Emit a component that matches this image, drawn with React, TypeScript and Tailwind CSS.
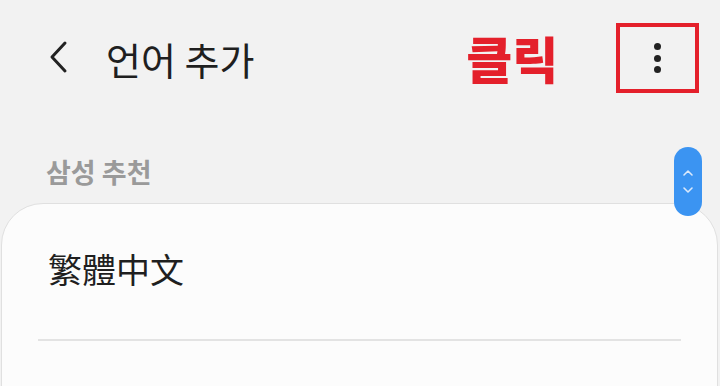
export default function App() {
  const ko = { fontFamily: '"Noto Sans CJK KR", "Noto Sans", sans-serif' };
  const tc = { fontFamily: '"Noto Sans CJK TC", "Noto Sans CJK KR", sans-serif' };
  return (
    <div className="relative w-[720px] h-[386px] overflow-hidden bg-[#f2f2f2]" style={ko}>
      {/* header */}
      <div className="flex items-center h-[116px] pl-[46px]">
        <svg width="24" height="34" viewBox="0 0 24 34" className="mt-[-2px] shrink-0">
          <path d="M19 3 L6 17 L19 31" fill="none" stroke="#222" strokeWidth="3" strokeLinecap="round" strokeLinejoin="round" />
        </svg>
        <h1 className="ml-[36px] text-[38px] leading-none text-[#1f1f1f] mt-[2px] whitespace-nowrap">언어 추가</h1>
        <span className="ml-[212px] text-[50px] font-black leading-none text-[#e4202b] mt-[-2px] whitespace-nowrap">클릭</span>
        <div className="ml-[58px] shrink-0 w-[83px] h-[70px] border-[4px] border-[#e4202b] flex items-center justify-center">
          <div className="flex flex-col gap-[4.5px]">
            <span className="w-[7px] h-[7px] rounded-full bg-[#222]" />
            <span className="w-[7px] h-[7px] rounded-full bg-[#222]" />
            <span className="w-[7px] h-[7px] rounded-full bg-[#222]" />
          </div>
        </div>
      </div>

      {/* section label */}
      <div className="pl-[46px] h-[87px] pt-[42px]">
        <span className="text-[27px] font-bold leading-none text-[#9a9a9a]">삼성 추천</span>
      </div>

      {/* card */}
      <div className="ml-[1px] mr-[2px] h-[260px] rounded-t-[42px] bg-[#fcfcfc] border border-[#e0e0e0]">
        <div className="h-[135px] pl-[46px] pt-[48px]">
          <span className="text-[34px] leading-none text-[#1f1f1f]" style={tc}>繁體中文</span>
        </div>
        <div className="mx-[36px] h-[2px] bg-[#e3e3e3]" />
      </div>

      {/* scroll pill */}
      <div className="absolute left-[674px] top-[147px] w-[28px] h-[69px] rounded-full bg-[#3b94f2] flex flex-col items-center justify-center gap-[9px]">
        <svg width="12" height="8" viewBox="0 0 12 8">
          <path d="M2 6 L6 2 L10 6" fill="none" stroke="#dbe9fb" strokeWidth="1.6" strokeLinecap="round" strokeLinejoin="round" />
        </svg>
        <svg width="12" height="8" viewBox="0 0 12 8">
          <path d="M2 2 L6 6 L10 2" fill="none" stroke="#dbe9fb" strokeWidth="1.6" strokeLinecap="round" strokeLinejoin="round" />
        </svg>
      </div>
    </div>
  );
}
